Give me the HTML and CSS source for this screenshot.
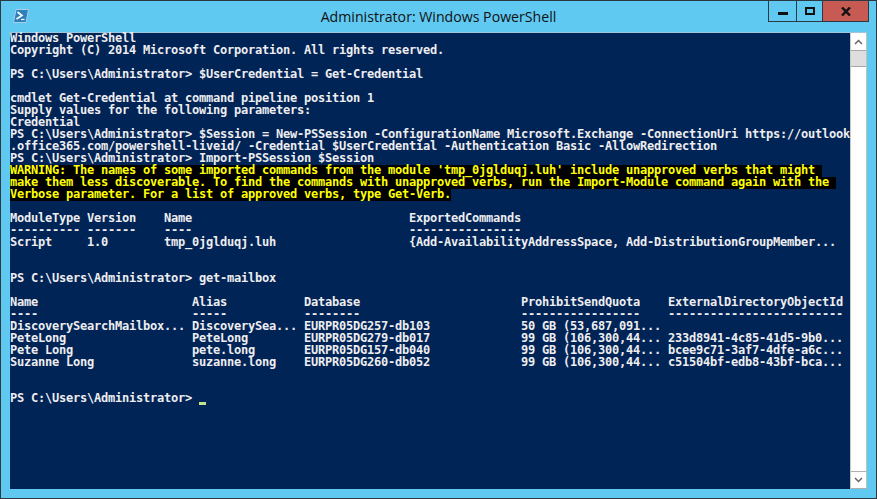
FILE: index.html
```html
<!DOCTYPE html>
<html lang="en">
<head>
<meta charset="utf-8">
<title>Administrator: Windows PowerShell</title>
<link rel="stylesheet" href="styles.css">
</head>
<body>
<div class="window">
  <header class="titlebar">
    <div class="title-left">
      <svg class="app-icon" width="18" height="16" viewBox="0 0 18 16">
        <path d="M4 1.500H16.500L14 14.500H1.500Z" fill="#2f7fbd" stroke="#a9cfe8" stroke-width="1"/>
        <path d="M5.500 4L10 7.500L4.500 11" fill="none" stroke="#fff" stroke-width="1.600"/>
        <path d="M9 11.500H12.500" stroke="#fff" stroke-width="1.200"/>
      </svg>
    </div>
    <div class="title-text">Administrator: Windows PowerShell</div>
    <div class="controls">
      <div class="ctl ctl-min"><span class="glyph-min"></span></div>
      <div class="ctl ctl-max"><span class="glyph-max"></span></div>
      <div class="ctl ctl-close">
        <svg width="10" height="9" viewBox="0 0 10 9"><path d="M1 0.500L9 8.500M9 0.500L1 8.500" stroke="#111" stroke-width="2.400"/></svg>
      </div>
    </div>
  </header>
  <main class="client">
    <div class="console">
      <div class="ln">Windows PowerShell</div>
      <div class="ln">Copyright (C) 2014 Microsoft Corporation. All rights reserved.</div>
      <div class="ln"></div>
      <div class="ln">PS C:\Users\Administrator&gt; $UserCredential = Get-Credential</div>
      <div class="ln"></div>
      <div class="ln">cmdlet Get-Credential at command pipeline position 1</div>
      <div class="ln">Supply values for the following parameters:</div>
      <div class="ln">Credential</div>
      <div class="ln">PS C:\Users\Administrator&gt; $Session = New-PSSession -ConfigurationName Microsoft.Exchange -ConnectionUri https://outlook</div>
      <div class="ln">.office365.com/powershell-liveid/ -Credential $UserCredential -Authentication Basic -AllowRedirection</div>
      <div class="ln">PS C:\Users\Administrator&gt; Import-PSSession $Session</div>
      <div class="ln warn">WARNING: The names of some imported commands from the module 'tmp_0jglduqj.luh' include unapproved verbs that might </div>
      <div class="ln warn">make them less discoverable. To find the commands with unapproved verbs, run the Import-Module command again with the </div>
      <div class="ln warn">Verbose parameter. For a list of approved verbs, type Get-Verb.</div>
      <div class="ln"></div>
      <div class="ln">ModuleType Version    Name                               ExportedCommands</div>
      <div class="ln">---------- -------    ----                               ----------------</div>
      <div class="ln">Script     1.0        tmp_0jglduqj.luh                   {Add-AvailabilityAddressSpace, Add-DistributionGroupMember...</div>
      <div class="ln"></div>
      <div class="ln"></div>
      <div class="ln">PS C:\Users\Administrator&gt; get-mailbox</div>
      <div class="ln"></div>
      <div class="ln">Name                      Alias           Database                       ProhibitSendQuota    ExternalDirectoryObjectId</div>
      <div class="ln">----                      -----           --------                       -----------------    -------------------------</div>
      <div class="ln">DiscoverySearchMailbox... DiscoverySea... EURPR05DG257-db103             50 GB (53,687,091...</div>
      <div class="ln">PeteLong                  PeteLong        EURPR05DG279-db017             99 GB (106,300,44... 233d8941-4c85-41d5-9b0...</div>
      <div class="ln">Pete Long                 pete.long       EURPR05DG157-db040             99 GB (106,300,44... bcee9c71-3af7-4dfe-a6c...</div>
      <div class="ln">Suzanne Long              suzanne.long    EURPR05DG260-db052             99 GB (106,300,44... c51504bf-edb8-43bf-bca...</div>
      <div class="ln"></div>
      <div class="ln"></div>
      <div class="ln">PS C:\Users\Administrator&gt; <span class="cursor"></span></div>
    </div>
    <aside class="scrollbar">
      <div class="sb-btn sb-up"><svg width="9" height="6" viewBox="0 0 9 6"><path d="M1 5L4.500 1.500L8 5" fill="none" stroke="#666" stroke-width="1.500"/></svg></div>
      <div class="sb-thumb"></div>
      <div class="sb-track"></div>
      <div class="sb-btn sb-down"><svg width="9" height="6" viewBox="0 0 9 6"><path d="M1 1L4.500 4.500L8 1" fill="none" stroke="#666" stroke-width="1.500"/></svg></div>
    </aside>
  </main>
</div>
</body>
</html>
```
FILE: styles.css
```css
* { box-sizing: border-box; }
html, body { margin: 0; padding: 0; background: #fff; }
body { width: 877px; height: 499px; overflow: hidden; }
.window {
  width: 877px;
  height: 499px;
  display: flex;
  flex-direction: column;
  background: #60c9f1;
  border: 1px solid #2b3a42;
  padding: 0 9px 9px;
}
.titlebar {
  height: 31px;
  flex: none;
  display: grid;
  grid-template-columns: 1fr auto 1fr;
  margin: 0 -9px;
}
.title-left { padding: 7px 0 0 11px; }
.app-icon { display: block; }
.title-text {
  font-family: "Open Sans", sans-serif;
  font-size: 14.150px;
  line-height: 32px;
  color: #111;
  white-space: nowrap;
}
.controls {
  display: flex;
  justify-content: flex-end;
  align-items: flex-start;
  padding-right: 7px;
}
.ctl {
  height: 21px;
  display: flex;
  align-items: center;
  justify-content: center;
  border: 1px solid #2b3a42;
  border-top: 0;
}
.ctl-min { width: 28px; border-right: 0; padding-top: 5px; }
.ctl-max { width: 26px; border-right: 0; }
.ctl-close { width: 47px; background: #c75a52; }
.glyph-min { display: block; width: 10px; height: 3px; background: #111; }
.glyph-max { display: block; width: 10px; height: 8px; border: 2px solid #111; }
.client {
  flex: 1;
  display: flex;
  min-height: 0;
  border-top: 1px solid #9fc6da;
}
.console {
  width: 840px;
  flex: none;
  background: #012456;
  color: #eeedf0;
  font-family: "DejaVu Sans Mono", monospace;
  font-weight: 700;
  font-size: 12px;
  letter-spacing: -0.224px;
}
.ln {
  height: 12px;
  line-height: 10px;
  white-space: pre;
}
.warn {
  width: fit-content;
  background: #000;
  color: #ffff00;
}
.cursor {
  display: inline-block;
  width: 7px;
  height: 3px;
  background: #c4e28c;
  vertical-align: -3px;
}
.scrollbar {
  width: 17px;
  flex: none;
  display: flex;
  flex-direction: column;
  background: #fff;
  border-left: 1px solid #c8c8c8;
  border-right: 1px solid #c0c0c0;
  border-bottom: 1px solid #b0b0b0;
}
.sb-btn {
  height: 17px;
  flex: none;
  display: flex;
  align-items: center;
  justify-content: center;
}
.sb-up { background: #fff; }
.sb-down { border-top: 1px solid #b0b0b0; }
.sb-thumb {
  height: 17px;
  flex: none;
  background: #dedede;
  border-top: 1px solid #a8a8a8;
  border-bottom: 1px solid #a8a8a8;
}
.sb-track { flex: 1; }
```
